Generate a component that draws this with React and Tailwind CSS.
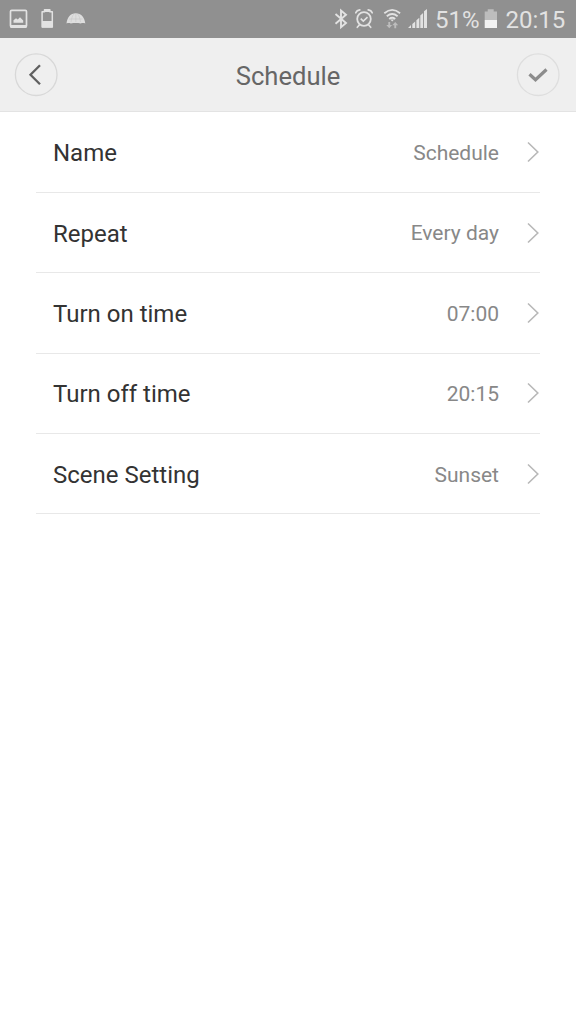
const rows = [
  { label: "Name", value: "Schedule" },
  { label: "Repeat", value: "Every day" },
  { label: "Turn on time", value: "07:00" },
  { label: "Turn off time", value: "20:15" },
  { label: "Scene Setting", value: "Sunset" },
];

function StatusBar() {
  return (
    <div className="flex h-[38px] items-center justify-between bg-[#909090] text-[#e2e2e2]">
      {/* Notifications */}
      <svg width="100" height="38" viewBox="0 0 100 38" fill="none">
        <rect x="10.5" y="10.3" width="16" height="16.7" rx="1.2" stroke="currentColor" strokeWidth="1.7" />
        <path d="M10.5 25h16v3h-16z" fill="currentColor" />
        <path d="M13.5 22.7v-2.5l2.5-2 1.8 1.3 2.2-2.3 3.2 3.2v2.3z" fill="currentColor" />
        <path d="M44.5 11.7V9.8h5.3v1.9h2.5v15.4H42.1V11.7z" stroke="currentColor" strokeWidth="1.5" strokeLinejoin="round" />
        <path d="M44.2 9.5h6V12h-6zM42 21h10.5v6.5H42z" fill="currentColor" />
        <path d="M66.5 23.5c.8-6.200 4-10.200 9.300-10.200s8.700 4 9.500 10.200c-1.500-.6-3-.6-4.500-.1-3.300-.6-6.700-.6-10 0-1.500-.4-2.800-.4-4.300.1z" fill="#dedede" />
        <path d="M71 22c.5-4 1.500-6.500 3-8M75.800 14v8M80.500 22c-.5-4-1.500-6.500-3-8M69 19h13.500" stroke="#c8c8c8" strokeWidth=".6" />
      </svg>

      <div className="flex h-full items-center">
        <svg width="104" height="38" viewBox="326 0 104 38" fill="none">
          {/* Bluetooth */}
          <path d="M335.500 14l10.500 9-5 4.200V10.500l5 4.200-10.500 9" stroke="currentColor" strokeWidth="1.900" />
          {/* Alarm */}
          <circle cx="364" cy="19" r="6.800" stroke="currentColor" strokeWidth="1.800" />
          <path d="M360.700 18.700l2.600 2.500 4.200-4" stroke="currentColor" strokeWidth="1.600" />
          <path d="M355.800 12.800q1-2.600 4-3M372.200 12.800q-1-2.600-4-3M359.500 24.800l-2.200 2.500M368.500 24.800l2.200 2.500" stroke="currentColor" strokeWidth="1.700" strokeLinecap="round" />
          {/* Wifi with traffic arrows */}
          <path d="M384.300 13.300q7.900-6.800 15.800 0M386.800 16.200q5.400-4.500 10.800 0M389.200 19q3-2.500 6 0" stroke="currentColor" strokeWidth="1.800" />
          <path d="M390.400 19.500h3.600l-1.800 2z" fill="currentColor" />
          <path d="M388.300 22h1.900v3h2l-2.950 3.200-2.950-3.200h2zM394.300 28.200v-3h-2l2.950-3.200 2.950 3.200h-2v3z" fill="#bdbdbd" />
          {/* Signal */}
          <path d="M408 28l3-3v3zM412.300 24l2.900-2.500V28h-2.900zM416.400 20.200l2.900-2.500V28h-2.900zM420.300 15.500l2.800-2.500V28h-2.800zM424 11.300l3-2.300v19h-3z" fill="currentColor" />
        </svg>
        <span className="ml-[5px] w-[45px] whitespace-nowrap pt-px text-[24px] leading-[38px]">51%</span>
        <svg className="ml-[4px]" width="14" height="38" viewBox="484 0 14 38">
          <path d="M484.700 11.500h3V9.300h6v2.200h3.300V20h-12.300z" fill="#bdbdbd" />
          <path d="M484.700 20H497v8h-12.300z" fill="#f2f2f2" />
        </svg>
        <span className="ml-[7.500px] w-[70.500px] whitespace-nowrap pt-px text-[24px] leading-[38px]">20:15</span>
      </div>
    </div>
  );
}

function Header() {
  return (
    <header className="flex h-[74px] items-center justify-between border-b border-[#e3e3e3] bg-[#efefef] pr-4 pl-[14px]">
      <button aria-label="Back">
        <svg width="44" height="44" viewBox="0 0 44 44" fill="none">
          <circle cx="22.2" cy="21.7" r="20.8" stroke="#d8d8d8" strokeWidth="1.3" />
          <path d="M26 12.2l-9.5 9.500 9.500 9.500" stroke="#606060" strokeWidth="2.300" />
        </svg>
      </button>
      <h1 className="pt-[2px] pl-[2px] text-[25.6px] leading-8 text-[#666]">Schedule</h1>
      <button aria-label="Save">
        <svg width="44" height="44" viewBox="0 0 44 44" fill="none">
          <circle cx="22.2" cy="21.7" r="20.8" stroke="#dedede" strokeWidth="1.3" />
          <path d="M13.5 21.2l6 5.500 11-10.200" stroke="#8c8c8c" strokeWidth="3.200" />
        </svg>
      </button>
    </header>
  );
}

function Row({ label, value }) {
  return (
    <li className="flex h-[80.4px] items-center border-b border-[#e8e8e8] pl-[17px]">
      <span className="pt-[2px] text-[24px] text-[#333]">{label}</span>
      <span className="ml-auto pt-[3px] text-[21px] text-[#888]">{value}</span>
      <svg className="ml-[27px]" width="14" height="22" viewBox="0 0 14 22" fill="none">
        <path d="M2 1.500l9.800 9.500L2 20.500" stroke="#b8b8b8" strokeWidth="1.600" />
      </svg>
    </li>
  );
}

function App() {
  return (
    <div className="min-h-screen bg-white font-['Roboto',sans-serif]">
      <StatusBar />
      <Header />
      <ul className="mx-9 pt-[0.5px]">
        {rows.map((row) => (
          <Row key={row.label} label={row.label} value={row.value} />
        ))}
      </ul>
    </div>
  );
}

export default App;
